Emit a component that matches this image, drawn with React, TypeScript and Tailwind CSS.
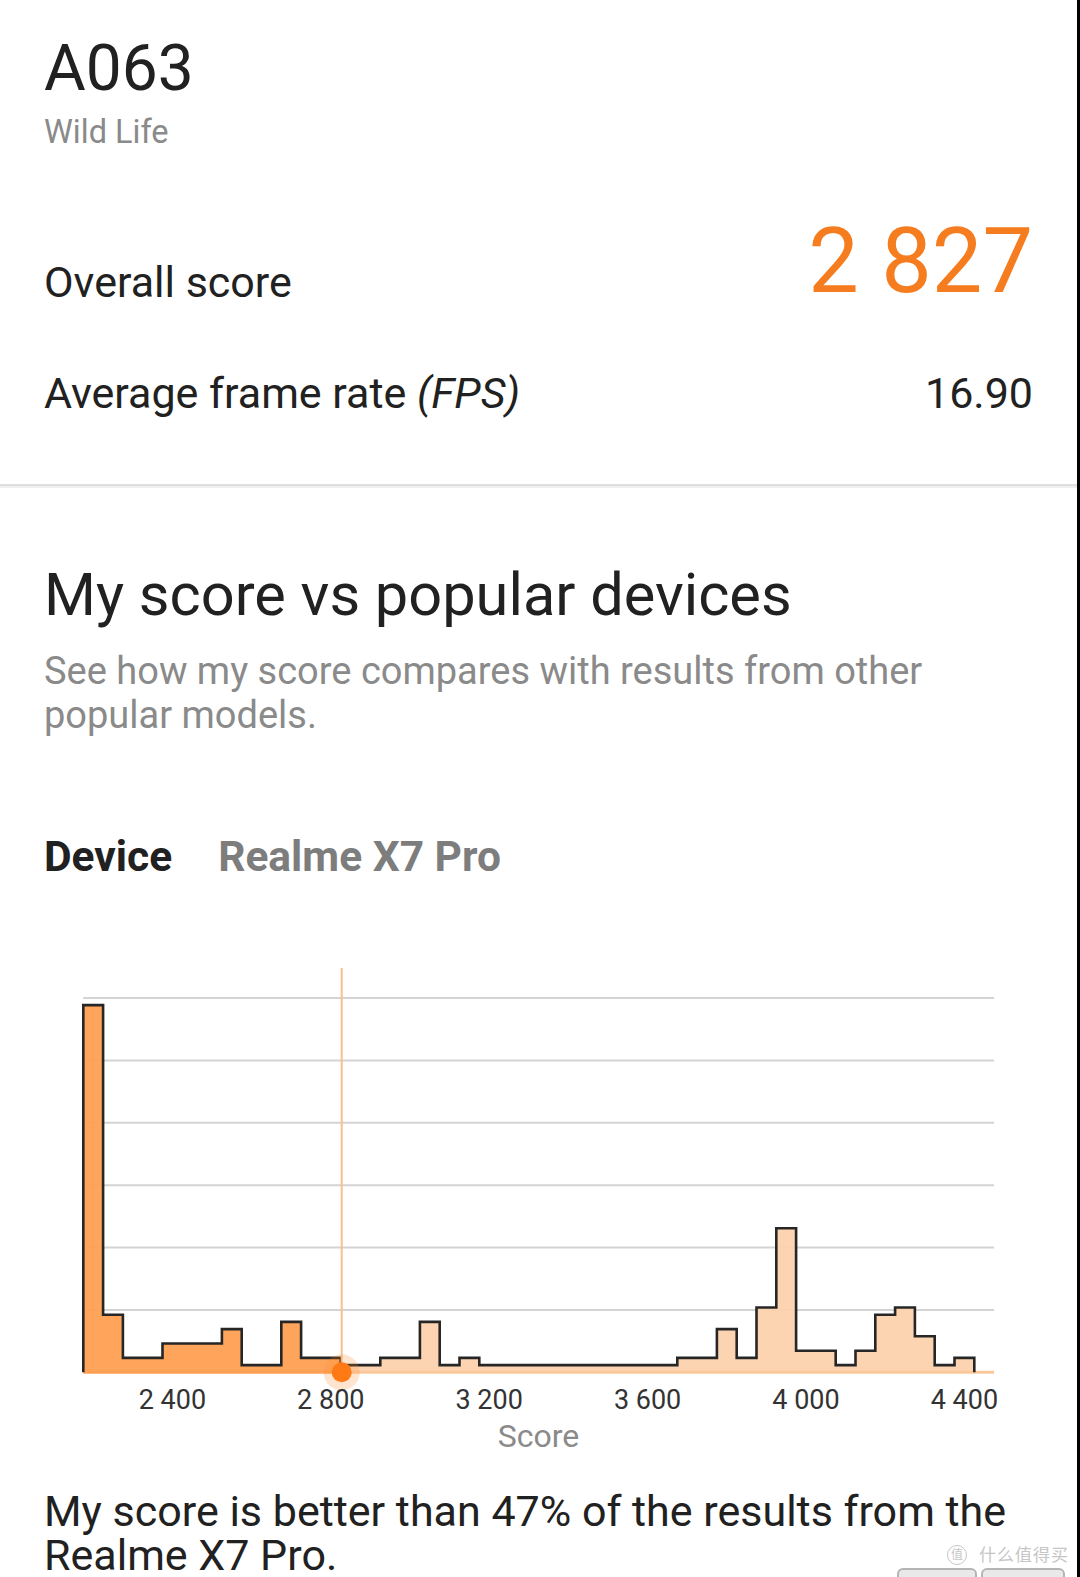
import React from "react";

// histogram geometry, page pixel coordinates
const BIN_X0 = 83.3;
const BIN_W = 19.8;
const BASE = 1373.3;
const UNIT = 7.2;
const SCORE_X = 341.7;
const GRID_TOP = 999;
const GRID_STEP = 62.4;
const GRID_RIGHT = 994;

const bins = [
  51, 8, 2, 2, 4, 4, 4, 6, 1, 1, 7, 2, 2, 1, 1, 2, 2, 7, 1, 2,
  1, 1, 1, 1, 1, 1, 1, 1, 1, 1,
  2, 2, 6, 2, 9, 20, 3, 3, 1, 3, 8, 9, 5, 1, 2,
];

const ticks = [2400, 2800, 3200, 3600, 4000, 4400];
const tickX = (s: number) => BIN_X0 + ((s - 2175) / 50) * BIN_W;

const outline = () => {
  let d = `M ${BIN_X0} ${BASE}`;
  bins.forEach((h, i) => {
    const x1 = BIN_X0 + i * BIN_W;
    const y = BASE - h * UNIT;
    d += ` L ${x1} ${y} L ${x1 + BIN_W} ${y}`;
  });
  d += ` L ${BIN_X0 + bins.length * BIN_W} ${BASE}`;
  return d;
};

const Histogram = () => {
  const path = outline();
  return (
    <svg width="1077" height="467" viewBox="0 950 1077 467" className="block">
      <defs>
        <clipPath id="leftSide">
          <rect x="0" y="900" width={SCORE_X} height="600" />
        </clipPath>
        <clipPath id="rightSide">
          <rect x={SCORE_X} y="900" width="800" height="600" />
        </clipPath>
      </defs>

      {/* grid */}
      {[0, 1, 2, 3, 4, 5].map((k) => (
        <line
          key={k}
          x1={BIN_X0}
          x2={GRID_RIGHT}
          y1={GRID_TOP + k * GRID_STEP}
          y2={GRID_TOP + k * GRID_STEP}
          stroke="#d3d3d3"
          strokeWidth="2"
        />
      ))}

      {/* fills */}
      <path d={path + " Z"} fill="#ff9f52" fillOpacity="0.95" clipPath="url(#leftSide)" />
      <path d={path + " Z"} fill="#fdd2ad" fillOpacity="0.95" clipPath="url(#rightSide)" />

      {/* baseline */}
      <line x1={BIN_X0} x2={SCORE_X} y1={BASE} y2={BASE} stroke="#ff9f52" strokeWidth="3" />
      <line x1={SCORE_X} x2={GRID_RIGHT} y1={BASE} y2={BASE} stroke="#fbc89c" strokeWidth="3" />

      {/* step outline */}
      <path d={path} fill="none" stroke="#262626" strokeWidth="2.6" strokeLinejoin="miter" />

      {/* my score marker */}
      <line x1={SCORE_X} x2={SCORE_X} y1="969" y2={BASE} stroke="#f8c08c" strokeWidth="2" />
      <circle cx={SCORE_X} cy={BASE} r="18" fill="#ff8a2a" fillOpacity="0.22" />
      <circle cx={SCORE_X} cy={BASE} r="10" fill="#ff7a14" />

      {/* axis */}
      {ticks.map((t) => (
        <text
          key={t}
          x={tickX(t)}
          y="1410"
          textAnchor="middle"
          className="text-[27px] fill-[#333333]"
        >
          {`${Math.floor(t / 1000)} ${String(t % 1000).padStart(3, "0")}`}
        </text>
      ))}
    </svg>
  );
};

const App = () => {
  return (
    <div className="relative w-[1080px] h-[1577px] overflow-hidden bg-white border-r-[3px] border-black font-['Roboto','Noto_Sans_CJK_SC',sans-serif] text-[#212121]">
      {/* TOP SUMMARY */}
      <div className="px-[44px] pt-[33px] pb-[67px]">
        <h1 className="text-[64px] leading-[72px]">A063</h1>
        <p className="mt-[7px] text-[32.5px] leading-[40px] text-[#8a8a8a]">Wild Life</p>

        <div className="mt-[64px] flex items-end justify-between">
          <span className="text-[43px] leading-[52px]">Overall score</span>
          <span className="text-[90px] leading-[92px] text-[#f57c1f]">2 827</span>
        </div>

        <div className="mt-[61px] flex items-baseline justify-between">
          <span className="text-[43px] leading-[48px]">
            Average frame rate <i>(FPS)</i>
          </span>
          <span className="text-[43px] leading-[48px]">16.90</span>
        </div>
      </div>

      <div className="h-[4px] border-t-2 border-[#dedede] bg-[#efefef]" />

      {/* COMPARISON */}
      <div className="px-[44px] pt-[72px]">
        <h2 className="text-[59.5px] leading-[70px]">My score vs popular devices</h2>
        <p className="mt-[19px] text-[38px] leading-[44px] text-[#8a8a8a]">
          See how my score compares with results from other popular models.
        </p>

        <div className="mt-[95px] flex gap-[46px] text-[42.5px] leading-[50px] font-bold">
          <span>Device</span>
          <span className="text-[#7d7d7d]">Realme X7 Pro</span>
        </div>
      </div>

      <div className="mt-[67px]">
        <Histogram />
        <p className="text-center text-[32px] leading-[40px] text-[#8a8a8a]">Score</p>
      </div>

      <p className="px-[44px] mt-[33px] text-[43px] leading-[44px]">
        My score is better than 47% of the results from the Realme X7 Pro.
      </p>

      {/* watermark */}
      <div className="absolute right-[8px] bottom-[12px] flex items-center gap-[12px] text-[#c6c6c6]">
        <span className="w-[20px] h-[20px] rounded-full border border-[#c6c6c6] flex items-center justify-center text-[12px] leading-none">
          值
        </span>
        <span className="text-[17px] leading-none tracking-[1px]">什么值得买</span>
      </div>
      <div className="absolute bottom-[-8px] right-[12px] flex gap-[4px]">
        <div className="w-[80px] h-[17px] rounded-md border-2 border-[#b5b5b5] bg-[#e9e9e9]" />
        <div className="w-[84px] h-[17px] rounded-md border-2 border-[#b5b5b5] bg-[#e9e9e9]" />
      </div>
    </div>
  );
};

export default App;
